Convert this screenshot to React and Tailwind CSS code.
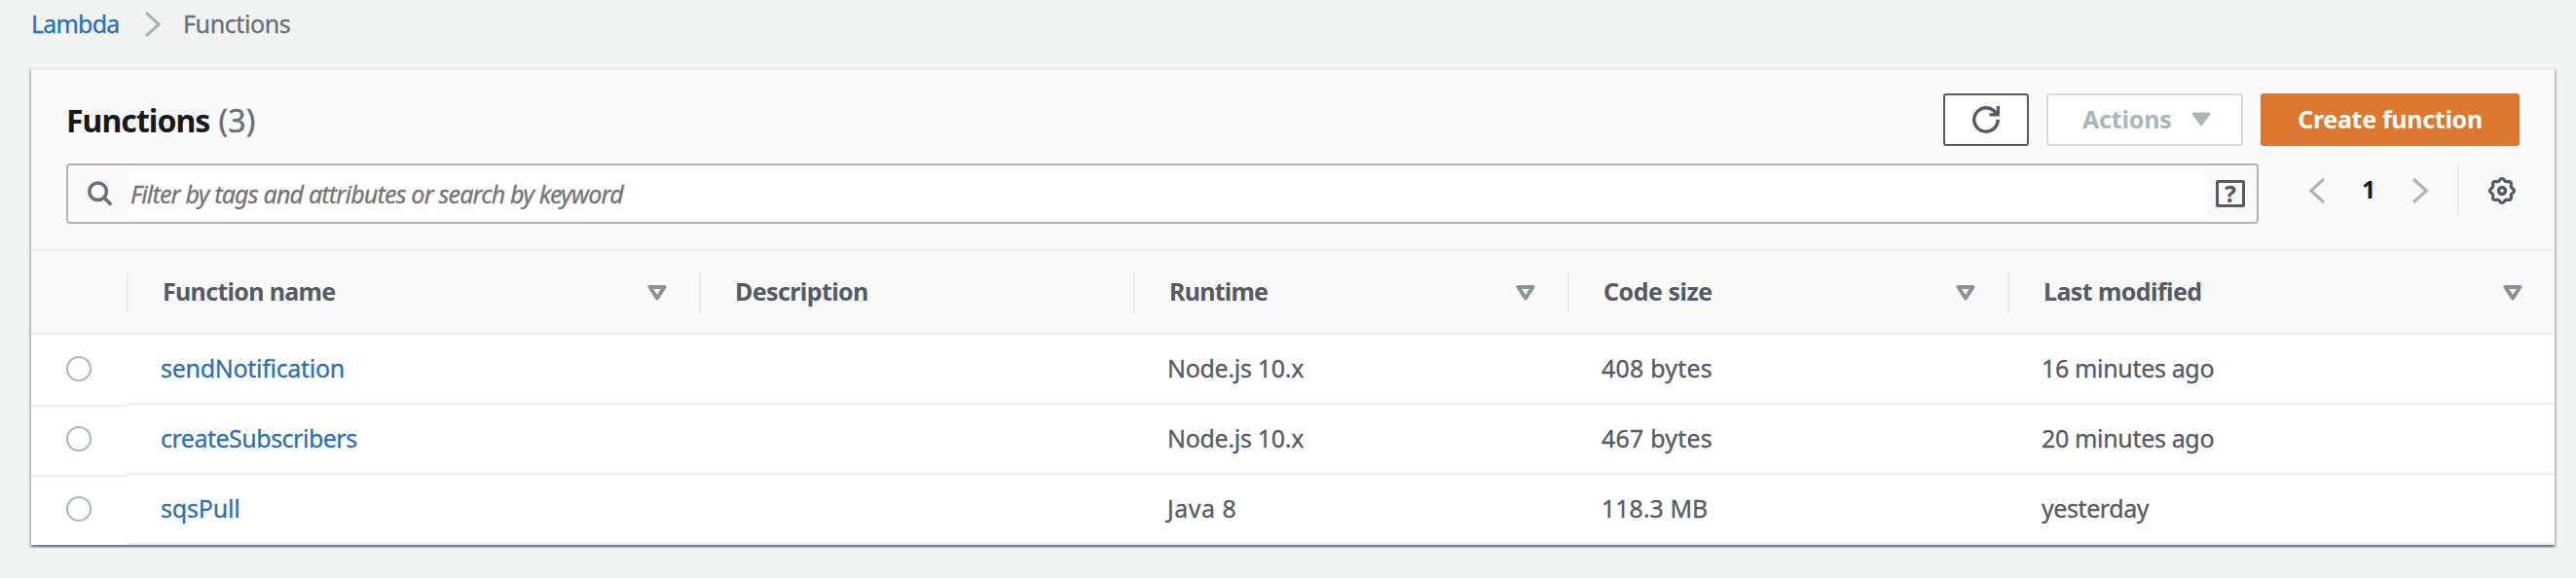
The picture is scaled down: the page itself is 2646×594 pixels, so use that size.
const rows = [
  {
    name: ["sendNotification", "tracking-[-0.29px]"],
    runtime: ["Node.js 10.x", "tracking-[-0.3px]"],
    size: ["408 bytes", "tracking-[0.21px]"],
    modified: ["16 minutes ago", "tracking-[-0.34px]"],
  },
  {
    name: ["createSubscribers", "tracking-[-0.5px]"],
    runtime: ["Node.js 10.x", "tracking-[-0.3px]"],
    size: ["467 bytes", "tracking-[0.21px]"],
    modified: ["20 minutes ago", "tracking-[-0.34px]"],
  },
  {
    name: ["sqsPull", "tracking-[-0.2px]"],
    runtime: ["Java 8", "tracking-[0.5px]"],
    size: ["118.3 MB", "tracking-[0px]"],
    modified: ["yesterday", "tracking-[-0.42px]"],
  },
];

const columns = [
  { label: "Function name", track: "tracking-[-0.68px]", sort: true },
  { label: "Description", track: "tracking-[-0.6px]", sort: false },
  { label: "Runtime", track: "tracking-[-0.75px]", sort: true },
  { label: "Code size", track: "tracking-[-0.5px]", sort: true },
  { label: "Last modified", track: "tracking-[-0.58px]", sort: true },
];

const grid = "grid grid-cols-[98px_588px_446px_446px_452px_562px]";

// Eight-lobed outline of the settings gear.
const gearPath =
  "M" +
  Array.from({ length: 96 }, (_, i) => {
    const a = (i / 96) * Math.PI * 2;
    const r = 11.3 + 1.15 * Math.cos(8 * a);
    return `${(14 + r * Math.cos(a)).toFixed(2)} ${(14 + r * Math.sin(a)).toFixed(2)}`;
  }).join("L") +
  "Z";

function Chevron({ left, className }) {
  return (
    <svg viewBox="0 0 18 28" className={className} fill="none" stroke="#aab7b8" strokeWidth="3.2">
      <path d={left ? "M16 2 2.8 14 16 26" : "M2 2l13.2 12L2 26"} />
    </svg>
  );
}

function SortIcon() {
  return (
    <svg viewBox="0 0 20 16" className="h-4 w-5" fill="none" stroke="#879596" strokeWidth="4" strokeLinejoin="round">
      <path d="M2.5 2h15L10 13.5z" />
    </svg>
  );
}

function Cell({ value, link }) {
  return (
    <div className="flex h-[72px] items-center border-b-2 border-[#eaeded] pb-[2px] pl-[35px]">
      {value && (
        <span className={`whitespace-nowrap ${value[1]} ${link ? "text-[#2a70b8]" : "text-[#545b64]"}`}>
          {value[0]}
        </span>
      )}
    </div>
  );
}

export default function App() {
  return (
    <div className="h-[594px] w-[2646px] overflow-hidden bg-[#f2f3f3] font-['Noto_Sans',sans-serif] text-[25px] leading-[34px] [-webkit-text-stroke:0.3px]">
      <nav className="flex h-[70px] items-start pt-[7px] pl-8">
        <a className="w-[116px] tracking-[-0.8px] text-[#2a70b8]">Lambda</a>
        <Chevron className="mt-1 h-7 w-[18px]" />
        <span className="pl-[22px] tracking-[-0.4px] text-[#687078]">Functions</span>
      </nav>

      <main className="ml-8 h-[490px] w-[2592px] border-t-2 border-[#eaeded] bg-white shadow-[0_2px_2px_0_rgba(0,28,36,0.42),2px_2px_2px_0_rgba(0,28,36,0.18),-2px_2px_2px_0_rgba(0,28,36,0.18)]">
        <header className="h-[186px] border-b-2 border-[#eaeded] bg-[#fafafa] pr-9 pl-9">
          <div className="flex h-24 items-start pt-6">
            <h1 className="flex-1 pt-[5px] text-[32px] leading-[46px] tracking-[-0.95px] text-[#16191f] [-webkit-text-stroke:0px]">
              <b>Functions</b>
              <span className="pl-[9px] tracking-[0.2px] text-[#687078] [-webkit-text-stroke:0.4px]">(3)</span>
            </h1>
            <div className="flex h-[54px] gap-[18px] font-bold [-webkit-text-stroke:0px]">
              <button className="flex w-[88px] items-center justify-center rounded-[3px] border-2 border-[#545b64] bg-white">
                <svg viewBox="0 0 28 28" className="h-7 w-7" fill="none" stroke="#545b64" strokeWidth="3.4">
                  <path d="M26.2 14A12.2 12.2 0 1 1 22 4.8L25 8" />
                  <path d="M28 0v10.4H17.5V7.2h4.6L24.8 4.6V0z" fill="#545b64" stroke="none" />
                </svg>
              </button>
              <button className="flex w-[202px] items-center rounded-[3px] border-2 border-[#d5dbdb] bg-white pb-[2px] pl-[35px] text-[#aab7b8]">
                <span className="w-[112px] text-left tracking-[-0.2px]">Actions</span>
                <svg viewBox="0 0 20 16" className="h-4 w-5">
                  <path d="M2.2 3h15.6L10 13.6z" fill="#aab7b8" stroke="#aab7b8" strokeWidth="3" strokeLinejoin="round" />
                </svg>
              </button>
              <button className="flex w-[266px] items-center justify-center rounded-[3px] bg-[#dd7831] pb-[2px] tracking-[-0.3px] text-white">
                Create function
              </button>
            </div>
          </div>

          <div className="flex items-start">
            <div className="flex h-[62px] w-[2252px] items-center rounded-[4px] border-2 border-[#aab7b8]">
              <div className="w-16 pl-5">
                <svg viewBox="0 0 26 26" className="h-[26px] w-[26px]" fill="none" stroke="#687078" strokeWidth="3.5">
                  <circle cx="10.6" cy="10.8" r="8.8" />
                  <path d="M16.8 17l7.4 7.4" />
                </svg>
              </div>
              <div className="flex h-[54px] flex-1 items-center bg-white tracking-[-0.8px] text-[#757575] italic">
                Filter by tags and attributes or search by keyword
              </div>
              <div className="w-[54px] pl-3">
                <div className="flex h-7 w-[30px] items-center justify-center rounded-[2px] border-[3.5px] border-[#545b64] text-[24px] leading-none font-bold text-[#545b64]">
                  ?
                </div>
              </div>
            </div>
            <Chevron left className="mt-[14px] ml-[51px] h-7 w-[18px]" />
            <b className="ml-[37px] w-[51px] pt-[9px] text-[25px] text-[#16191f] [-webkit-text-stroke:0px]">1</b>
            <Chevron className="mt-[14px] h-7 w-[18px]" />
            <div className="ml-[29px] h-[54px] w-[2px] bg-[#eaeded]" />
            <svg viewBox="0 0 28 28" className="mt-[14px] ml-[30px] h-7 w-7" fill="none" stroke="#545b64">
              <path strokeWidth="3.2" d={gearPath} />
              <circle cx="14" cy="14" r="3.5" strokeWidth="3.4" />
            </svg>
          </div>
        </header>

        <div className={`${grid} h-[86px] border-b-2 border-[#eaeded] bg-[#fafafa] pt-[22px] font-bold text-[#545b64] [-webkit-text-stroke:0px]`}>
          <div />
          {columns.map((c) => (
            <div key={c.label} className="flex h-[42px] items-center justify-between border-l-2 border-[#eaeded] pr-[33px] pb-[5px] pl-[35px]">
              <span className={`whitespace-nowrap ${c.track}`}>{c.label}</span>
              {c.sort && (
                <span className="pt-[4px]">
                  <SortIcon />
                </span>
              )}
            </div>
          ))}
        </div>

        {rows.map((r, i) => (
          <div key={i} className={`${grid} h-[72px] items-start`}>
            <div className={`h-[74px] pt-[22px] pl-9 ${i < 2 ? "border-b-2 border-[#eaeded]" : ""}`}>
              <div className="h-[26px] w-[26px] rounded-full border-2 border-[#aab7b8] bg-white" />
            </div>
            <Cell value={r.name} link />
            <Cell />
            <Cell value={r.runtime} />
            <Cell value={r.size} />
            <Cell value={r.modified} />
          </div>
        ))}
      </main>
    </div>
  );
}
